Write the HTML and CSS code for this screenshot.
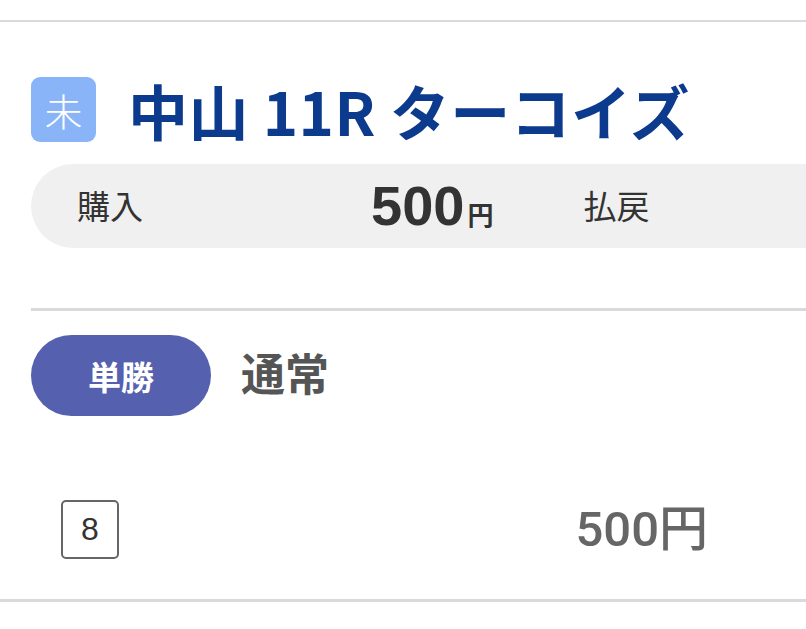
FILE: index.html
```html
<!DOCTYPE html>
<html lang="ja">
<head>
<meta charset="utf-8">
<link rel="stylesheet" href="styles.css">
</head>
<body>
<div class="page">
  <div class="rule rule-top"></div>
  <section class="race">
    <div class="race-head">
      <span class="status">未</span>
      <h1 class="race-title">中山 11R ターコイズ</h1>
    </div>
    <div class="summary">
      <div class="summary-item">
        <span class="summary-label">購入</span>
        <span class="summary-value"><span class="num">500</span><span class="yen">円</span></span>
      </div>
      <div class="summary-item">
        <span class="summary-label">払戻</span>
        <span class="summary-value"></span>
      </div>
    </div>
    <div class="rule rule-inner"></div>
    <div class="bet-head">
      <span class="bet-type">単勝</span>
      <span class="bet-mode">通常</span>
    </div>
    <div class="bet-line">
      <span class="horse-no">8</span>
      <span class="bet-amount">500円</span>
    </div>
  </section>
  <div class="rule rule-bottom"></div>
</div>
</body>
</html>
```

FILE: styles.css
```css
html, body {
  margin: 0;
  padding: 0;
  background: #ffffff;
  overflow: hidden;
}

.page {
  width: 1000px;
  font-family: "Noto Sans CJK JP", sans-serif;
  color: #333333;
}

.rule {
  height: 2px;
  background: #dadada;
}

.rule-top {
  margin-top: 20px;
}

.race {
  padding: 55px 0 0 31px;
}

.race-head {
  display: flex;
  align-items: center;
  gap: 32px;
  height: 65px;
}

.status {
  width: 65px;
  height: 65px;
  flex: none;
  border-radius: 9px;
  background: #8ab4f8;
  color: #ffffff;
  font-size: 38px;
  font-weight: 300;
  line-height: 65px;
  text-align: center;
}

.race-title {
  margin: 0;
  font-size: 60px;
  font-weight: 700;
  line-height: 65px;
  color: #0c3a8d;
  white-space: nowrap;
  letter-spacing: 0.4px;
}

.summary {
  margin-top: 22px;
  height: 84px;
  border-radius: 42px 0 0 42px;
  background: #f0f0f0;
  display: flex;
  align-items: center;
  gap: 90px;
  padding-left: 46px;
}

.summary-item {
  width: 418px;
  display: flex;
  align-items: center;
  justify-content: space-between;
}

.summary-label {
  font-size: 33px;
  color: #333333;
  margin-top: -3px;
}

.summary-value {
  display: flex;
  align-items: baseline;
  color: #333333;
  font-weight: 700;
}

.num {
  font-family: "Liberation Sans", "Noto Sans CJK JP", sans-serif;
  font-size: 56px;
  line-height: 1;
}

.yen {
  font-size: 26px;
  margin-left: 3px;
}

.rule-inner {
  margin-top: 60px;
  height: 3px;
}

.bet-head {
  margin-top: 24px;
  display: flex;
  align-items: center;
  gap: 30px;
  height: 81px;
}

.bet-type {
  width: 180px;
  height: 81px;
  border-radius: 41px;
  background: #5560ae;
  color: #ffffff;
  font-size: 33px;
  font-weight: 700;
  display: flex;
  align-items: center;
  justify-content: center;
}

.bet-mode {
  font-size: 44px;
  font-weight: 700;
  color: #555555;
  margin-top: -8px;
}

.bet-line {
  margin-top: 84px;
  padding-left: 30px;
  display: flex;
  align-items: center;
  height: 59px;
}

.horse-no {
  box-sizing: border-box;
  width: 58px;
  height: 59px;
  border: 2px solid #666666;
  border-radius: 5px;
  display: flex;
  align-items: center;
  justify-content: center;
  font-family: "Liberation Sans", sans-serif;
  font-size: 32px;
  color: #333333;
}

.bet-amount {
  width: 589px;
  text-align: right;
  font-family: "Roboto", "Noto Sans CJK JP", sans-serif;
  font-weight: 500;
  font-size: 49px;
  line-height: 59px;
  color: #666666;
}

.rule-bottom {
  margin-top: 40px;
  height: 3px;
}
```
